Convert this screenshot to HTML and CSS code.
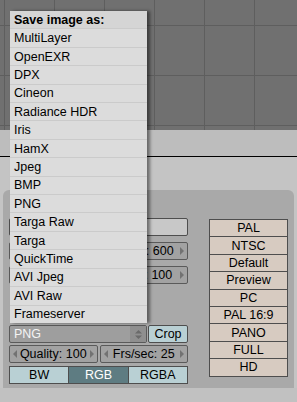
FILE: index.html
```html
<!DOCTYPE html>
<html lang="en">
<head>
    <meta charset="UTF-8">
    <meta name="viewport" content="width=device-width, initial-scale=1.0">
    <title>Format panel</title>
    <link rel="stylesheet" href="styles.css">
</head>
<body>
    <!-- 3D view grid -->
    <div class="grid-view"></div>
    <div class="header-bar"></div>

    <!-- Buttons window -->
    <div class="buttons-window">
        <div class="panel">
            <div class="left-col">
                <div class="btn grey"></div>
                <div class="row r-size">
                    <div class="num"><span class="arr left"></span><span class="arr right"></span></div>
                    <div class="num"><span class="arr left"></span><span>SizeY: 600</span><span class="arr right"></span></div>
                </div>
                <div class="row r-asp">
                    <div class="num"><span class="arr left"></span><span class="arr right"></span></div>
                    <div class="num"><span class="arr left"></span><span>AspY: 100</span><span class="arr right"></span></div>
                </div>
                <div class="row r-type">
                    <div class="select">
                        <span>PNG</span>
                        <span class="updown">
                            <svg width="9" height="11" viewBox="0 0 9 11"><path d="M1 4.5 L4.5 1 L8 4.5 Z M1 6.5 L4.5 10 L8 6.5 Z" fill="#6a6a6a"/></svg>
                        </span>
                    </div>
                    <div class="btn teal crop">Crop</div>
                </div>
                <div class="row r-quality">
                    <div class="num"><span class="arr left"></span><span>Quality: 100</span><span class="arr right"></span></div>
                    <div class="num"><span class="arr left"></span><span>Frs/sec: 25</span><span class="arr right"></span></div>
                </div>
                <div class="row joined">
                    <div class="btn teal">BW</div>
                    <div class="btn teal on">RGB</div>
                    <div class="btn teal">RGBA</div>
                </div>
            </div>
            <div class="right-col">
                <div class="btn beige">PAL</div>
                <div class="btn beige">NTSC</div>
                <div class="btn beige">Default</div>
                <div class="btn beige">Preview</div>
                <div class="btn beige">PC</div>
                <div class="btn beige">PAL 16:9</div>
                <div class="btn beige">PANO</div>
                <div class="btn beige">FULL</div>
                <div class="btn beige">HD</div>
            </div>
        </div>
    </div>
    <div class="bottom-strip"></div>

    <!-- Popup menu -->
    <div class="menu">
        <div class="menu-title">Save image as:</div>
        <div class="menu-item">MultiLayer</div>
        <div class="menu-item">OpenEXR</div>
        <div class="menu-item">DPX</div>
        <div class="menu-item">Cineon</div>
        <div class="menu-item">Radiance HDR</div>
        <div class="menu-item">Iris</div>
        <div class="menu-item">HamX</div>
        <div class="menu-item">Jpeg</div>
        <div class="menu-item">BMP</div>
        <div class="menu-item">PNG</div>
        <div class="menu-item">Targa Raw</div>
        <div class="menu-item">Targa</div>
        <div class="menu-item">QuickTime</div>
        <div class="menu-item">AVI Jpeg</div>
        <div class="menu-item">AVI Raw</div>
        <div class="menu-item">Frameserver</div>
    </div>
</body>
</html>
```

FILE: styles.css
```css
body {
    margin: 0;
    width: 297px;
    height: 402px;
    overflow: hidden;
    position: relative;
    background: #c1c1c1;
    font-family: "Liberation Sans", Arial, sans-serif;
    font-size: 12.5px;
    color: #000;
}

.grid-view {
    height: 130px;
    background-color: #707070;
    background-image:
        linear-gradient(to right, #5e5e5e 1px, transparent 1px),
        linear-gradient(to bottom, #5e5e5e 1px, transparent 1px);
    background-size: 50px 50px;
    background-position: 4px 25px;
}

.header-bar {
    height: 26px;
    background: #bdbdbd;
    border-bottom: 1px solid #000;
}

.buttons-window {
    background: #c4c4c4;
    padding: 33px 3px 0 3px;
}

.panel {
    height: 198px;
    box-sizing: border-box;
    background: #a9a9a9;
    border-radius: 6px 6px 0 0;
    padding: 28px 6px 0 6px;
    display: flex;
    gap: 21px;
}

.left-col {
    width: 179px;
    display: flex;
    flex-direction: column;
}

.right-col {
    width: 79px;
    display: flex;
    flex-direction: column;
    padding-top: 1px;
}

.row {
    display: flex;
    gap: 2px;
}

.r-size {
    margin-top: 6px;
}

.r-asp {
    margin-top: 6px;
}

.r-type {
    margin-top: 41px;
    gap: 1px;
}

.r-quality {
    margin-top: 2px;
}

.row.joined {
    gap: 0;
    margin-top: 3px;
}

.btn {
    height: 18px;
    box-sizing: border-box;
    border: 1px solid #4e4e4e;
    border-radius: 2px;
    display: flex;
    align-items: center;
    justify-content: center;
    white-space: nowrap;
    overflow: hidden;
}

.btn.grey {
    background: #c8c8c8;
}

.btn.beige {
    background: #d7cbc1;
    height: 18.4px;
    border-radius: 0;
    margin-top: -1px;
}

.btn.beige:first-child {
    margin-top: 0;
}

.btn.teal {
    background: #b9d0d4;
    flex: 1;
}

.btn.teal.on {
    background: #5e7c82;
    color: #fff;
}

.row.joined .btn {
    border-radius: 0;
    margin-left: -1px;
}

.row.joined .btn:first-child {
    margin-left: 0;
}

.crop {
    flex: 0 0 40px !important;
}

.num {
    flex: 1;
    height: 18px;
    box-sizing: border-box;
    background: #a2a2a2;
    border: 1px solid #5a5a5a;
    border-radius: 2px;
    display: flex;
    align-items: center;
    justify-content: space-between;
    padding: 0 3px;
    white-space: nowrap;
}

.arr {
    width: 0;
    height: 0;
    border-top: 4px solid transparent;
    border-bottom: 4px solid transparent;
}

.arr.left {
    border-right: 4px solid #727272;
}

.arr.right {
    border-left: 4px solid #727272;
}

.select {
    flex: 1;
    height: 18px;
    box-sizing: border-box;
    background: #9e9e9e;
    border: 1px solid #5a5a5a;
    border-radius: 2px;
    display: flex;
    align-items: center;
    justify-content: space-between;
    padding-left: 4px;
    color: #f4f4f4;
}

.updown {
    width: 16px;
    height: 100%;
    background: #8f8f8f;
    display: flex;
    align-items: center;
    justify-content: center;
}

.updown svg {
    display: block;
}

.bottom-strip {
    height: 14px;
}

.menu {
    position: absolute;
    left: 10px;
    top: 11px;
    width: 137px;
    height: 312px;
    display: flex;
    flex-direction: column;
    background: #dcdcdc;
    box-shadow: 3px 0 3px rgba(0, 0, 0, 0.45);
}

.menu-title,
.menu-item {
    flex: 1;
    display: flex;
    align-items: center;
    padding-left: 4px;
    white-space: nowrap;
}

.menu-title {
    background: #d5d5d5;
    font-weight: bold;
    font-size: 12.5px;
}

.menu-item {
    border-top: 1px solid #cbcbcb;
}
```
